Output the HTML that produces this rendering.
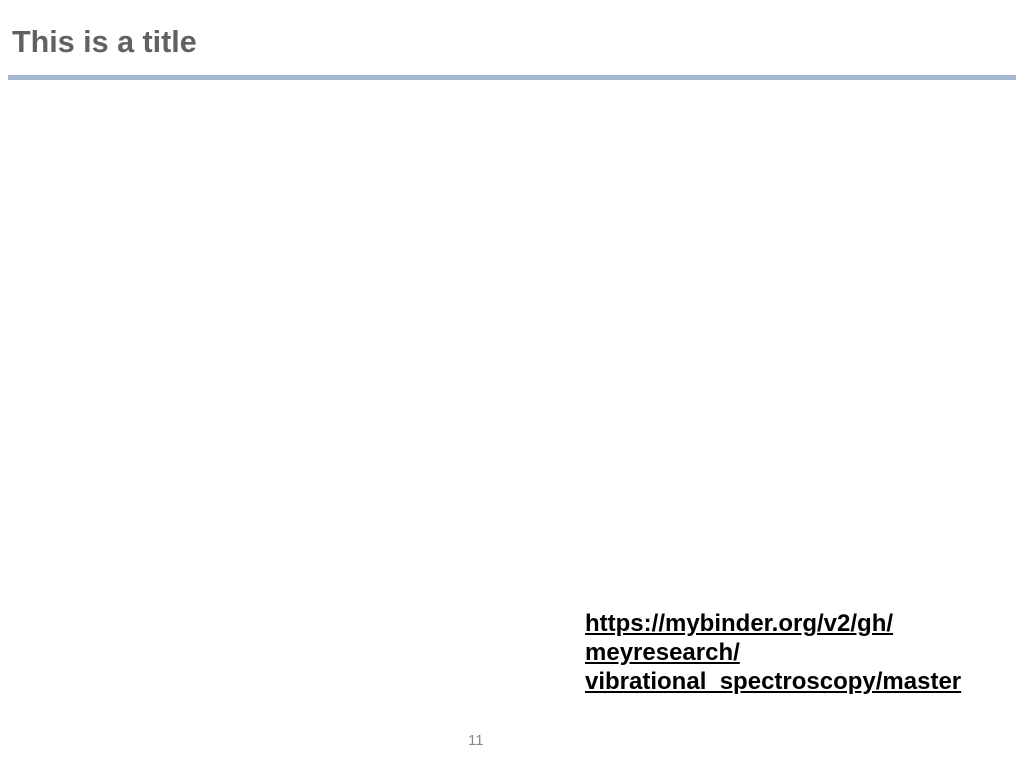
<!DOCTYPE html>
<html><head><style>
body{margin:0;width:1024px;height:768px;background:#fff;position:relative;overflow:hidden;font-family:"Liberation Sans",Arial,sans-serif}
.t{position:absolute;left:12px;top:25px;font-size:30.5px;font-weight:bold;color:#616161;white-space:nowrap}
.r{position:absolute;left:8px;top:75px;width:1008px;height:5px;background:#a3b6cc}
.l{position:absolute;left:585px;top:609px;font-size:24px;line-height:29px;font-weight:bold;color:#000;text-decoration:underline;white-space:nowrap}
.n{position:absolute;left:468px;top:732px;font-size:15px;color:#8a8a8a}
</style></head><body>
<div class="t">This is a title</div>
<div class="r"></div>
<div class="l">https://mybinder.org/v2/gh/<br>meyresearch/<br>vibrational_spectroscopy/master</div>
<div class="n">11</div>
</body></html>
